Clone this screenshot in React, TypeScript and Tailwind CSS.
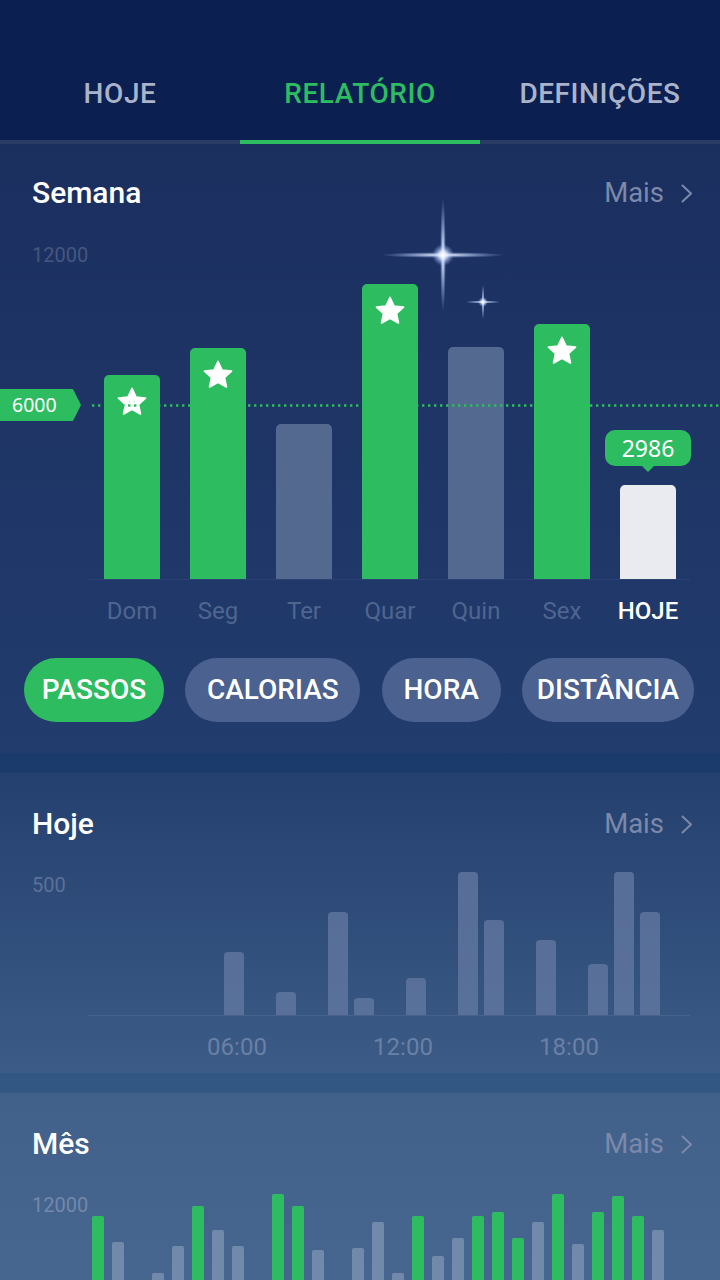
import React from "react";

const font = { fontFamily: "Roboto, 'Noto Sans', sans-serif" };

const week = [
  { d: "Dom", h: 204, g: true, star: true, face: true },
  { d: "Seg", h: 231, g: true, star: true },
  { d: "Ter", h: 155 },
  { d: "Quar", h: 295, g: true, star: true },
  { d: "Quin", h: 232 },
  { d: "Sex", h: 255, g: true, star: true },
  { d: "HOJE", h: 94, today: true },
];

// today chart: hour slot -> top y (baseline 1015)
const todayBars: Record<number, number> = {
  5: 952,
  7: 992,
  9: 912,
  10: 998,
  12: 978,
  14: 872,
  15: 920,
  17: 940,
  19: 964,
  20: 872,
  21: 912,
};

const month: ([number, boolean] | null)[] = [
  [1216, true],
  [1242, false],
  null,
  [1273, false],
  [1246, false],
  [1206, true],
  [1230, false],
  [1246, false],
  null,
  [1194, true],
  [1206, true],
  [1250, false],
  null,
  [1248, false],
  [1222, false],
  [1273, false],
  [1216, true],
  [1256, false],
  [1238, false],
  [1216, true],
  [1212, true],
  [1238, true],
  [1222, false],
  [1194, true],
  [1244, false],
  [1212, true],
  [1196, true],
  [1216, true],
  [1230, false],
];

function Star({ face }: { face?: boolean }) {
  return (
    <svg width="34" height="34" viewBox="0 0 24 24">
      <path
        d="M12 2.5l2.8 6.1 6.7.7-5 4.5 1.4 6.6L12 17l-5.9 3.4 1.4-6.6-5-4.5 6.7-.7z"
        fill="#ffffff"
        stroke="#ffffff"
        strokeWidth="1.3"
        strokeLinejoin="round"
      />
      {face && (
        <>
          <circle cx="10.3" cy="11.6" r="0.45" fill="#b5e6c6" />
          <circle cx="13.7" cy="11.6" r="0.45" fill="#b5e6c6" />
        </>
      )}
    </svg>
  );
}

function Chevron() {
  return (
    <svg width="12" height="19" viewBox="0 0 12 19" className="ml-[17px]">
      <polyline
        points="1.5,1.5 10,9.5 1.5,17.5"
        fill="none"
        stroke="#7b89ab"
        strokeWidth="2"
        strokeLinecap="round"
        strokeLinejoin="round"
      />
    </svg>
  );
}

function Header({ title }: { title: string }) {
  return (
    <div className="flex items-center justify-between h-[52px] pl-8 pr-[27px]">
      <div className="text-[30px] font-medium text-white leading-[52px]">{title}</div>
      <div className="flex items-center">
        <span className="text-[27.5px] text-[#7b89ab] leading-[52px]">Mais</span>
        <Chevron />
      </div>
    </div>
  );
}

function Sparkles() {
  return (
    <svg width="130" height="125" viewBox="0 0 130 125" className="absolute left-[380px] top-[-48px] pointer-events-none">
      <defs>
        <radialGradient id="ray">
          <stop offset="0" stopColor="#ffffff" stopOpacity="1" />
          <stop offset="0.25" stopColor="#dfe9ff" stopOpacity="0.8" />
          <stop offset="1" stopColor="#9fbcff" stopOpacity="0" />
        </radialGradient>
        <radialGradient id="glow">
          <stop offset="0" stopColor="#ffffff" stopOpacity="1" />
          <stop offset="0.35" stopColor="#e8f0ff" stopOpacity="0.85" />
          <stop offset="1" stopColor="#8fb0ff" stopOpacity="0" />
        </radialGradient>
      </defs>
      <ellipse cx="63" cy="60" rx="62" ry="3" fill="url(#ray)" />
      <ellipse cx="63" cy="60" rx="3" ry="58" fill="url(#ray)" />
      <circle cx="63" cy="60" r="11" fill="url(#glow)" />
      <ellipse cx="103" cy="107" rx="18" ry="1.6" fill="url(#ray)" />
      <ellipse cx="103" cy="107" rx="1.6" ry="18" fill="url(#ray)" />
      <circle cx="103" cy="107" r="5" fill="url(#glow)" />
    </svg>
  );
}

export default function App() {
  const pills = [
    { t: "PASSOS", w: 140, on: true },
    { t: "CALORIAS", w: 175 },
    { t: "HORA", w: 119 },
    { t: "DISTÂNCIA", w: 172 },
  ];
  return (
    <div className="w-[720px] h-[1280px] overflow-hidden bg-[#0c1f51]" style={font}>
      {/* Tabs */}
      <div className="h-[140px] grid grid-cols-3 bg-[#0c1f51]">
        <div className="flex items-center justify-center pt-[48px] text-[28px] font-medium tracking-[0.02em] text-[#a9b3c9]">HOJE</div>
        <div className="flex items-center justify-center pt-[48px] text-[28px] font-medium tracking-[0.02em] text-[#2dbd60]">RELATÓRIO</div>
        <div className="flex items-center justify-center pt-[48px] text-[28px] font-medium tracking-[0.02em] text-[#a9b3c9]">DEFINIÇÕES</div>
      </div>
      <div className="h-[4px] bg-[#2a3c66]">
        <div className="ml-[240px] w-[240px] h-full bg-[#2dbd60]" />
      </div>

      <div className="flex flex-col gap-5 bg-[linear-gradient(180deg,#1a3366_0px,#1b3a6c_620px,#335783_940px,#3a5f8c_1136px)]">
        {/* Week */}
        <div className="h-[609px] pt-[23px] bg-[linear-gradient(180deg,#1b2f5f,#213c6d)]">
          <Header title="Semana" />
          <div className="relative mt-[24px]">
            <div className="pl-8 h-6 leading-6 text-[20px] text-[#45577f]">12000</div>
            <div className="ml-[88px] w-[602px] h-[313px] border-b border-[#2b4372] flex items-end gap-[30px] pl-[16px]">
              {week.map((b) => (
                <div
                  key={b.d}
                  className={`relative w-[56px] rounded-t-[5px] flex justify-center pt-[10px] ${
                    b.today ? "bg-[#e9ebf0]" : b.g ? "bg-[#2dbd60]" : "bg-[#53698f]"
                  }`}
                  style={{ height: b.h }}
                >
                  {b.star && (
                    <div className="h-[34px]">
                      <Star face={b.face} />
                    </div>
                  )}
                  {b.today && (
                    <div className="absolute bottom-full mb-[13px] left-1/2 -translate-x-1/2 flex flex-col items-center">
                      <div
                        className="w-[86px] h-[36px] rounded-[10px] bg-[#2dbd60] flex items-center justify-center text-[23px] text-white"
                        style={{ fontFamily: "'Noto Sans', 'Open Sans', sans-serif" }}
                      >
                        2986
                      </div>
                      <div className="w-0 h-0 border-x-[6px] border-x-transparent border-t-[6px] border-t-[#2dbd60]" />
                    </div>
                  )}
                </div>
              ))}
            </div>
            {/* goal line */}
            <svg className="absolute left-[88px] top-[161px]" width="632" height="3">
              <line x1="4" y1="1.5" x2="632" y2="1.5" stroke="#2dbd60" strokeWidth="2.4" strokeDasharray="2.4 3.6" />
            </svg>
            <div
              className="absolute left-0 top-[146px] w-[81px] h-[32px] bg-[#2dbd60] [clip-path:polygon(0_0,90%_0,100%_50%,90%_100%,0_100%)] pl-3 text-[19.5px] leading-[32px] text-white"
              style={{ fontFamily: "'Noto Sans', 'Open Sans', sans-serif" }}
            >
              6000
            </div>
            <Sparkles />
          </div>
          <div className="flex pl-[104px] gap-[30px] mt-[17px]">
            {week.map((b) => (
              <div
                key={b.d}
                className={`w-[56px] text-center text-[24px] leading-[28px] whitespace-nowrap flex justify-center ${
                  b.today ? "text-white font-medium" : "text-[#4f6590]"
                }`}
              >
                {b.d}
              </div>
            ))}
          </div>
          <div className="flex justify-between pl-6 pr-[26px] mt-[33px]">
            {pills.map((p) => (
              <div
                key={p.t}
                className={`h-16 rounded-full flex items-center justify-center text-[28px] font-medium text-white whitespace-nowrap ${
                  p.on ? "bg-[#2dbd60]" : "bg-[#4b6190]"
                }`}
                style={{ width: p.w }}
              >
                {p.t}
              </div>
            ))}
          </div>
        </div>

        {/* Today */}
        <div className="h-[300px] pt-[25px] bg-[linear-gradient(180deg,#24406f,#3c5b86)]">
          <Header title="Hoje" />
          <div className="flex mt-[22px]">
            <div className="w-[88px] pl-8 text-[20px] leading-6 text-[#5c7199] mt-[1px]">500</div>
            <div className="w-[602px] h-[144px] border-b border-[#46618c] flex items-end gap-[6px] pl-[6px]">
              {Array.from({ length: 23 }).map((_, i) => {
                const top = todayBars[i];
                return (
                  <div
                    key={i}
                    className="w-[20px] rounded-t-[4px] bg-[#6178a0]/80"
                    style={{ height: top ? 1015 - top : 0 }}
                  />
                );
              })}
            </div>
          </div>
          <div className="flex pl-[207px] gap-[106px] mt-[17px]">
            {["06:00", "12:00", "18:00"].map((t) => (
              <div key={t} className="w-[60px] text-center text-[24px] leading-[28px] text-[#6a80a6] whitespace-nowrap flex justify-center">
                {t}
              </div>
            ))}
          </div>
        </div>

        {/* Month */}
        <div className="h-[400px] pt-[25px] bg-[linear-gradient(180deg,#41608a,#4c6c95)]">
          <Header title="Mês" />
          <div className="flex mt-[23px]">
            <div className="w-[88px] pl-8 text-[20px] leading-6 text-[#7388ab]">12000</div>
            <div className="w-[602px] h-[207px] flex items-end gap-[8px] pl-[4px]">
              {month.map((m, i) => (
                <div
                  key={i}
                  className={`w-[12px] rounded-t-[2px] ${m && m[1] ? "bg-[#2dbd60]" : "bg-[#7189ab]"}`}
                  style={{ height: m ? 1400 - m[0] : 0 }}
                />
              ))}
            </div>
          </div>
        </div>
      </div>
    </div>
  );
}
